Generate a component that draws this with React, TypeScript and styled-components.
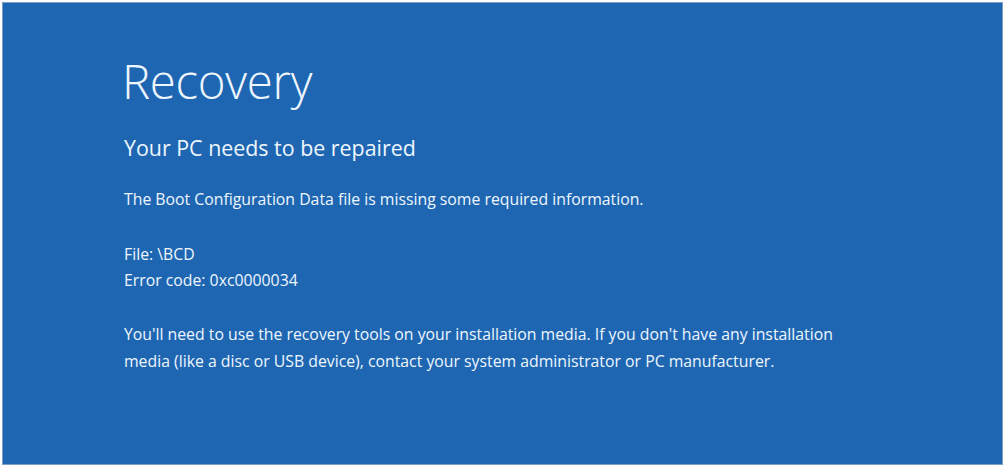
import styled, { createGlobalStyle } from "styled-components"

const GlobalStyle = createGlobalStyle`
  html, body {
    margin: 0;
    padding: 0;
    background: #ffffff;
  }
  body {
    width: 1006px;
    height: 467px;
    overflow: hidden;
  }
`

const Frame = styled.div`
  box-sizing: border-box;
  width: 1006px;
  height: 467px;
  padding: 2px 3px 2px 2px;
  background: #ffffff;
`

const Screen = styled.main`
  box-sizing: border-box;
  height: 100%;
  background: #1f66b2;
  border: 1px solid #7d9fc6;
  padding: 43px 0 0 119px;
  color: #eef6fd;
  font-family: "Open Sans", "Noto Sans", sans-serif;
  display: flex;
  flex-direction: column;
`

const Title = styled.h1`
  margin: 0;
  font-size: 47.4px;
  font-weight: 300;
  line-height: 70px;
  letter-spacing: -0.3px;
`

const Subtitle = styled.h2`
  margin: 17px 0 0 2px;
  font-size: 21.4px;
  font-weight: 400;
  line-height: 30px;
`

const Text = styled.p<{ $gap?: number }>`
  margin: ${p => p.$gap ?? 0}px 0 0 2px;
  font-size: 15.8px;
  line-height: 26px;
`

const Paragraph = styled(Text)`
  line-height: 27px;
`

const App = () => {
  return (
    <>
      <GlobalStyle />
      <Frame>
        <Screen>
          <Title>Recovery</Title>
          <Subtitle>Your PC needs to be repaired</Subtitle>
          <Text $gap={23}>
            The Boot Configuration Data file is missing some required information.
          </Text>
          <Text $gap={29}>File: \BCD</Text>
          <Text>Error code: 0xc0000034</Text>
          <Paragraph $gap={28}>
            You'll need to use the recovery tools on your installation media. If you don't have any installation
            <br />
            media (like a disc or USB device), contact your system administrator or PC manufacturer.
          </Paragraph>
        </Screen>
      </Frame>
    </>
  )
}

export default App
